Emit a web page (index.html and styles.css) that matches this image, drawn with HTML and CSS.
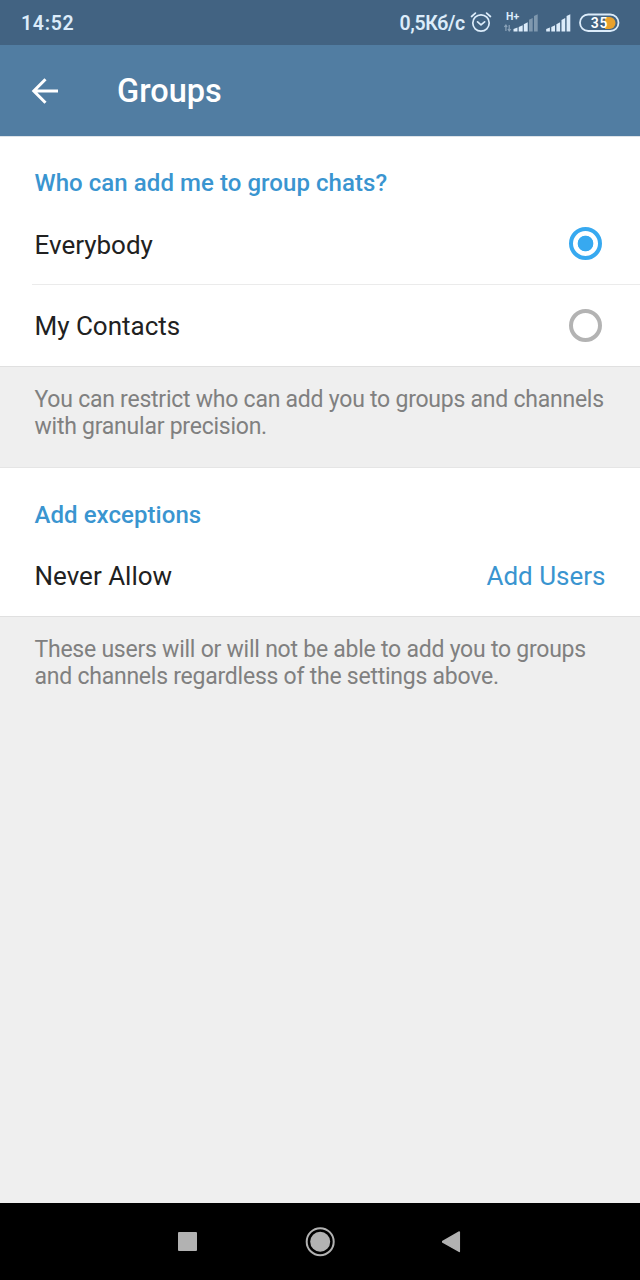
FILE: index.html
```html
<!DOCTYPE html>
<html lang="en">
<head>
  <meta charset="UTF-8" />
  <title>Groups</title>
  <link rel="stylesheet" href="styles.css">
</head>
<body>
  <div class="status-bar">
    <span class="clock">14:52</span>
    <span class="speed">0,5Кб/с</span>
    <svg class="alarm" width="22" height="22" viewBox="0 0 22 22" fill="none" stroke="#dcecfa" stroke-width="1.7" stroke-linecap="round" stroke-linejoin="round">
      <circle cx="11" cy="11" r="8.2"/>
      <path d="M1.6 4.5 5.4 1.100M16.6 1.100l3.8 3.4M7.6 9.900l3.4 2.9 3.6-2.9"/>
    </svg>
    <svg class="mobile" width="34" height="26" viewBox="0 -2 34 26">
      <text class="network" x="2" y="8">H+</text>
      <path d="M1.9 13v6M.3 15l1.6-2 1.2 2M5.2 13v6M3.9 17l1.3 2 1.6-2" fill="none" stroke="#8ba3b9" stroke-width="1.2"/>
      <path d="M9.5 17l4-1.500V19.500h-4zM14.700 15l4-1.700v6.200h-4zM19.800 12.200l3.900-1.900v9.200h-3.900z" fill="#dcecfa"/>
      <path d="M25 7.700l3.700-1.800v13.600H25zM30 4.100L33.700 2.300v17.200H30z" fill="#7f98ae"/>
    </svg>
    <svg class="signal" width="25" height="22" viewBox="0 0 25 22" fill="#dcecfa">
      <path d="M.2 17l3.700-1.500v4H.2zM5.300 15l3.700-1.700v6.200H5.300zM10.400 12.200l3.700-1.900v9.200h-3.700zM15.500 8l3.700-1.900v13.400h-3.700zM20.600 4.100l3.700-1.900v17.300h-3.700z"/>
    </svg>
    <svg class="battery" width="41" height="20" viewBox="0 0 41 20">
      <path d="M26 4h4.500a6 6 0 0 1 0 12H26z" fill="#e8a12c"/>
      <rect x="1" y="1.500" width="38.500" height="16.500" rx="8.250" fill="none" stroke="#dcecfa" stroke-width="1.800"/>
      <text class="level" x="11.800" y="15">35</text>
    </svg>
  </div>

  <header class="toolbar">
    <svg class="back" width="28" height="28" viewBox="0 0 28 28" fill="none" stroke="#fff" stroke-width="3">
      <path d="M27 14H3M14.500 2.300 2.800 14l11.700 11.700"/>
    </svg>
    <h1>Groups</h1>
  </header>

  <main>
    <section class="card">
      <h2>Who can add me to group chats?</h2>
      <div class="row first">
        <span>Everybody</span>
        <span class="radio checked"></span>
      </div>
      <div class="row last">
        <span>My Contacts</span>
        <span class="radio"></span>
      </div>
    </section>
    <p class="info">You can restrict who can add you to groups and channels<br>with granular precision.</p>

    <section class="card exceptions">
      <h2>Add exceptions</h2>
      <div class="row last">
        <span>Never Allow</span>
        <a class="action">Add Users</a>
      </div>
    </section>
    <p class="info">These users will or will not be able to add you to groups<br>and channels regardless of the settings above.</p>
  </main>

  <nav class="nav-bar">
    <svg width="20" height="20" viewBox="0 0 20 20"><rect x="1" y="0" width="19" height="19" rx="1" fill="#b2b2b2"/></svg>
    <svg width="30" height="30" viewBox="0 0 30 30"><circle cx="15.200" cy="14.700" r="13.500" fill="none" stroke="#b2b2b2" stroke-width="2"/><circle cx="15.200" cy="14.700" r="10" fill="#b2b2b2"/></svg>
    <svg width="20" height="22" viewBox="0 0 20 22"><path d="M.2 10.700 17.300 1v19.400z" fill="#b2b2b2" stroke="#b2b2b2" stroke-width="1.500" stroke-linejoin="round"/></svg>
  </nav>
</body>
</html>
```
FILE: styles.css
```css
* {
  box-sizing: border-box;
}

body {
  margin: 0;
  height: 1280px;
  display: flex;
  flex-direction: column;
  background: #efefef;
  font-family: Roboto, sans-serif;
  color: #212121;
}

svg {
  display: block;
  flex: none;
}

.status-bar {
  height: 45px;
  padding: 0 20px 0 21px;
  display: flex;
  align-items: center;
  background: #426382;
  color: #dcecfa;
  font-size: 19.5px;
  font-weight: 600;
}

.clock {
  margin-right: auto;
  padding-top: 2px;
  letter-spacing: 0.7px;
}

.speed {
  padding-top: 2px;
  letter-spacing: -0.3px;
}

.alarm {
  margin: 0 12px 0 5px;
}

.signal {
  margin: 0 8px;
}

.network {
  font-size: 10.5px;
  font-weight: 700;
  fill: #dcecfa;
}

.level {
  font-size: 14px;
  font-weight: 600;
  letter-spacing: 0.8px;
  fill: #fff;
}

.toolbar {
  height: 91px;
  padding-left: 31px;
  display: flex;
  align-items: center;
  gap: 58px;
  background: #517da2;
  color: #fff;
}

h1 {
  margin: 0;
  padding-top: 1px;
  font-size: 32.5px;
  font-weight: 500;
}

main {
  flex: 1;
  border-top: 1px solid #dde3e8;
}

.card {
  background: #fff;
  border-bottom: 1px solid #e0e0e0;
}

h2 {
  margin: 0;
  padding: 31px 34.5px 0;
  height: 67px;
  font-size: 24px;
  line-height: 30px;
  font-weight: 500;
  letter-spacing: 0.06px;
  color: #3a95d0;
}

.exceptions h2 {
  padding-top: 32px;
}

.row {
  height: 81px;
  padding-right: 34.5px;
  margin-left: 32px;
  padding-left: 2.5px;
  display: flex;
  align-items: center;
  justify-content: space-between;
  font-size: 26px;
  border-bottom: 1px solid #ebebeb;
}

.row.last {
  border-bottom: 0;
}

.row.first span:first-child {
  padding-top: 2px;
}

.radio {
  width: 33px;
  height: 33px;
  margin-right: 3.5px;
  border: 4px solid #b3b3b3;
  border-radius: 50%;
}

.radio.checked {
  margin-bottom: 2px;
  border-color: #37a9f0;
  background: radial-gradient(circle, #37a9f0 7.5px, #fff 8.2px);
}

.action {
  color: #3a95d0;
}

.info {
  margin: 0;
  height: 101px;
  padding: 19px 34px 0 34.5px;
  font-size: 23px;
  line-height: 27px;
  letter-spacing: -0.24px;
  color: #808080;
  border-bottom: 1px solid #e5e5e5;
}

.info:last-child {
  border-bottom: 0;
}

.nav-bar {
  height: 77px;
  padding: 0 178px 0 177px;
  display: flex;
  align-items: center;
  justify-content: space-between;
  background: #000;
}
```
